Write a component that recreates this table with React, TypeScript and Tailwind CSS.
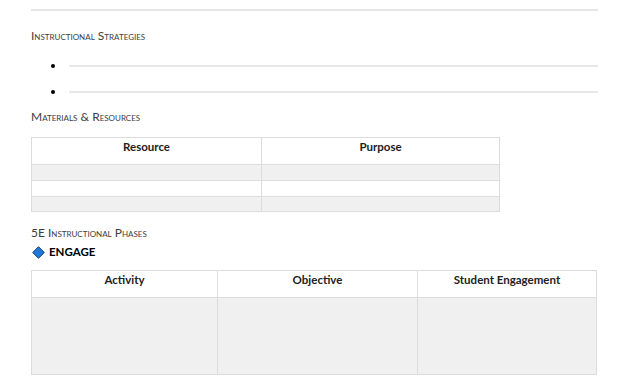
import React from "react";

const font = { fontFamily: "Lato, 'Open Sans', sans-serif" };

function Heading({ children }: { children: React.ReactNode }) {
  return (
    <div className="text-[12px] leading-[14px] text-[#404040] [font-variant:small-caps]">{children}</div>
  );
}

function Bullet() {
  return (
    <div className="flex h-[26px] items-center">
      <div className="ml-[20px] h-[4px] w-[4px] rounded-full bg-black" />
      <div className="ml-[14px] h-[2px] flex-1 bg-[#e8e8e8]" />
    </div>
  );
}

export default function App() {
  const rows = ["bg-[#f0f0f0]", "bg-white", "bg-[#f0f0f0]"];
  const rowH = ["h-[16px]", "h-[16px]", "h-[15px]"];
  return (
    <div className="h-[380px] w-[630px] overflow-hidden bg-white pl-[31px] pr-[32px] pt-[9px] text-black" style={font}>
      <div className="h-[2px] bg-[#e6e6e6]" />
      <div className="mt-[18px]">
        <Heading>Instructional Strategies</Heading>
      </div>
      <div className="mt-[10px]">
        <Bullet />
        <Bullet />
      </div>
      <div className="mt-[5px]">
        <Heading>Materials &amp; Resources</Heading>
      </div>
      <div className="mt-[13px] w-[469px] border-l border-t border-[#dcdcdc]">
        <div className="grid grid-cols-[230px_238px]">
          <div className="h-[27px] border-b border-r border-[#dcdcdc] pt-[1px] text-center text-[11.5px] font-bold leading-[16px] text-[#222]">Resource</div>
          <div className="h-[27px] border-b border-r border-[#dcdcdc] pt-[1px] text-center text-[11.5px] font-bold leading-[16px] text-[#222]">Purpose</div>
          {rows.map((bg, i) => (
            <React.Fragment key={i}>
              <div className={`${rowH[i]} ${bg} border-b border-r border-[#dcdcdc]`} />
              <div className={`${rowH[i]} ${bg} border-b border-r border-[#dcdcdc]`} />
            </React.Fragment>
          ))}
        </div>
      </div>
      <div className="mt-[14px]">
        <Heading>5E Instructional Phases</Heading>
      </div>
      <div className="mt-[5px] flex h-[14px] items-center">
        <svg width="13" height="13" viewBox="0 0 13 13" className="ml-[1px]">
          <path d="M6.5 0.7 L12.3 6.5 L6.5 12.3 L0.7 6.5 Z" fill="#1f78d8" stroke="#0d3f7e" strokeWidth="1" />
        </svg>
        <span className="ml-[4px] text-[11.5px] font-bold leading-[14px] text-black">ENGAGE</span>
      </div>
      <div className="mt-[11px] w-[566px] border-l border-t border-[#dcdcdc]">
        <div className="grid grid-cols-[186px_200px_179px]">
          {["Activity", "Objective", "Student Engagement"].map((h) => (
            <div key={h} className="h-[27px] border-b border-r border-[#dcdcdc] pt-[1px] text-center text-[11.5px] font-bold leading-[16px] text-[#222]">
              {h}
            </div>
          ))}
          {[0, 1, 2].map((i) => (
            <div key={i} className="h-[77px] border-b border-r border-[#dcdcdc] bg-[#f0f0f0]" />
          ))}
        </div>
      </div>
    </div>
  );
}
